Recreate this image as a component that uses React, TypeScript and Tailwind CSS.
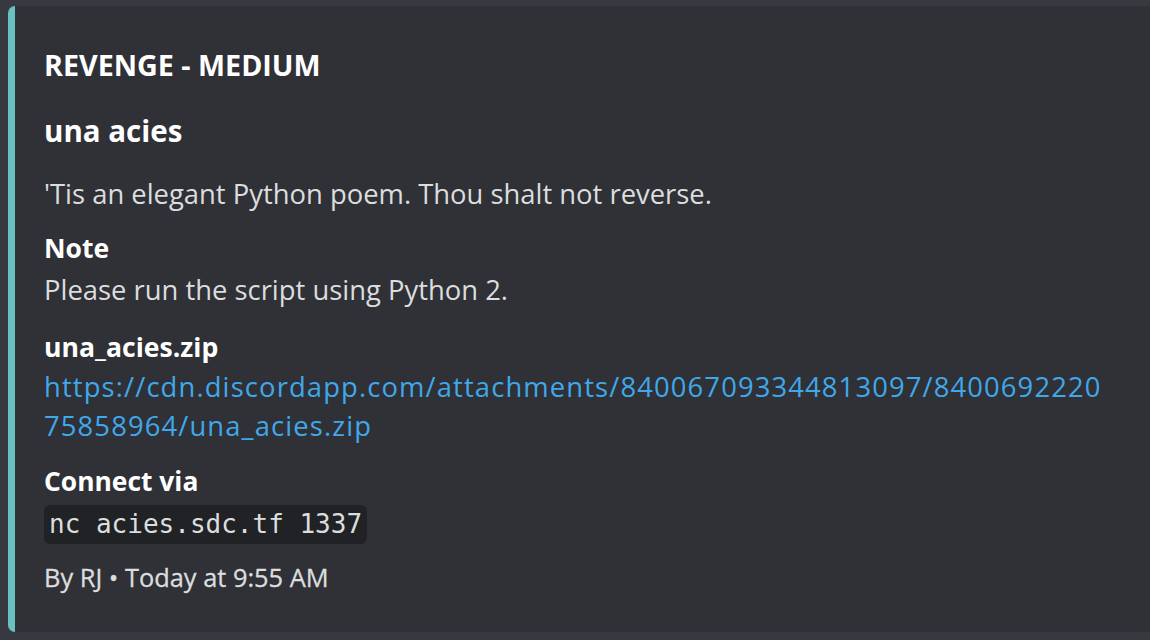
import React from "react";

export default function App() {
  const sans = { fontFamily: '"Open Sans", "Noto Sans", sans-serif' };
  return (
    <div className="w-[1150px] h-[640px] bg-[#36393f] pt-[6px] pl-[8px] overflow-hidden" style={sans}>
      <div className="h-[626px] bg-[#2f3136] rounded-l-[7px] border-l-[7px] border-[#68c1c0] pl-[29px] pt-[41px]">
        <div className="text-[28.7px] leading-[36px] font-bold text-white">REVENGE - MEDIUM</div>
        <div className="mt-[30px] text-[29.5px] leading-[36px] font-bold text-white">una acies</div>
        <div className="mt-[27px] text-[27.4px] leading-[36px] text-[#dcddde]">'Tis an elegant Python poem. Thou shalt not reverse.</div>
        <div className="mt-[15px] text-[26.5px] leading-[42px] font-bold text-white">Note</div>
        <div className="text-[27.4px] leading-[42px] text-[#dcddde]">Please run the script using Python 2.</div>
        <div className="mt-[16px] text-[26.6px] leading-[40px] font-bold text-white">una_acies.zip</div>
        <div className="text-[27.4px] leading-[39px] tracking-[1.12px]">
          <a href="#" className="text-[#40a8ea]">
            https://cdn.discordapp.com/attachments/840067093344813097/8400692220
            <br />
            75858964/una_acies.zip
          </a>
        </div>
        <div className="mt-[16px] text-[26.4px] leading-[40px] font-bold text-white">Connect via</div>
        <div className="mt-[4px] flex">
          <code
            className="h-[39px] px-[5px] rounded-[6px] bg-[#202225] text-[#dcddde] text-[26px] leading-[39px]"
            style={{ fontFamily: '"DejaVu Sans Mono", "Liberation Mono", monospace' }}
          >
            nc acies.sdc.tf 1337
          </code>
        </div>
        <div className="mt-[15px] text-[25.4px] leading-[36px] text-[#dcddde] [-webkit-text-stroke:0.3px_#dcddde]">By RJ • Today at 9:55 AM</div>
      </div>
    </div>
  );
}
